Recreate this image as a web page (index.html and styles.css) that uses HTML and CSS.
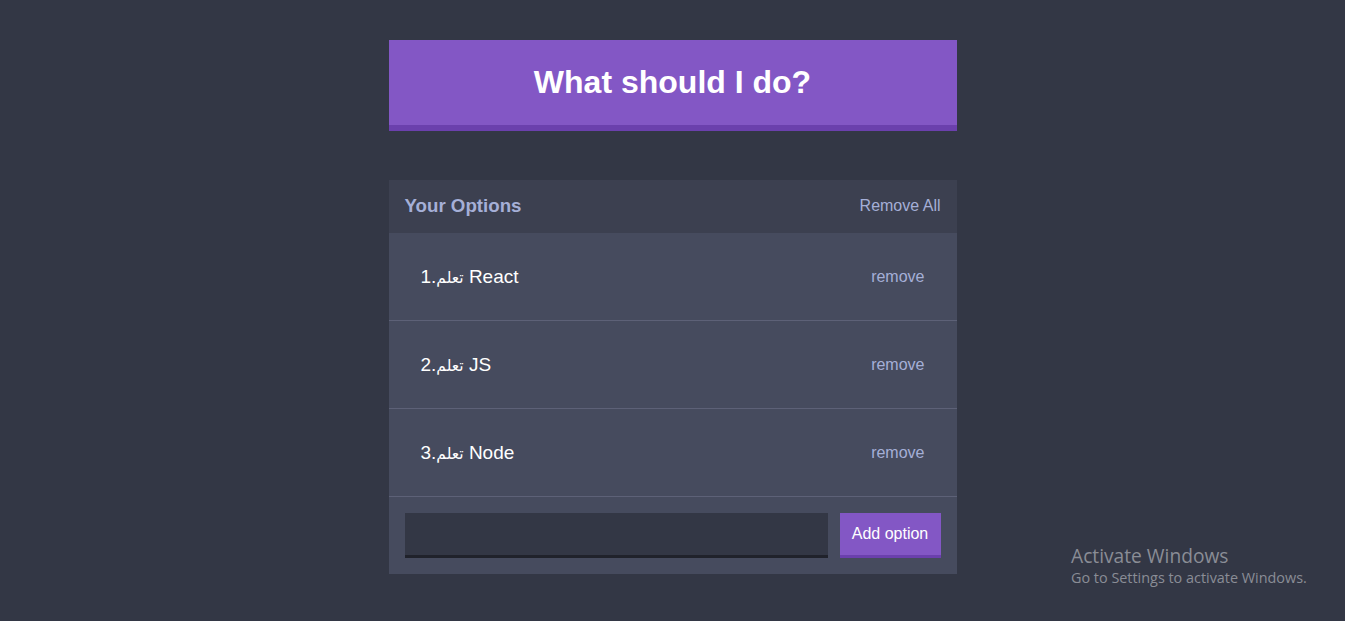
FILE: index.html
```html
<!DOCTYPE html>
<html lang="en">
<head>
<meta charset="utf-8">
<title>Indecision</title>
<link rel="stylesheet" href="styles.css">
</head>
<body>
<div class="container">
  <header class="header">
    <h1 class="header__title">What should I do?</h1>
  </header>
  <div class="widget">
    <div class="widget-header">
      <h3 class="widget-header__title">Your Options</h3>
      <button class="button-link">Remove All</button>
    </div>
    <div class="option">
      <p class="option__text">1.<span class="option__ar">تعلم</span> React</p>
      <button class="button-link button-link--small">remove</button>
    </div>
    <div class="option">
      <p class="option__text">2.<span class="option__ar">تعلم</span> JS</p>
      <button class="button-link button-link--small">remove</button>
    </div>
    <div class="option">
      <p class="option__text">3.<span class="option__ar">تعلم</span> Node</p>
      <button class="button-link button-link--small">remove</button>
    </div>
    <form class="add-option">
      <input class="add-option__input" type="text" name="option">
      <button class="button" type="button">Add option</button>
    </form>
  </div>
</div>
<div class="activate">
  <div class="activate__title">Activate Windows</div>
  <div class="activate__sub">Go to Settings to activate Windows.</div>
</div>
</body>
</html>
```
FILE: styles.css
```css
html, body {
  margin: 0;
  padding: 0;
}
body {
  background: #333745;
  font-family: Arial, "Liberation Sans", "DejaVu Sans", sans-serif;
  color: #ffffff;
  height: 621px;
  overflow: hidden;
}
.container {
  width: 568px;
  margin: 0 auto;
  padding-top: 40px;
}
.header {
  background: #8357c5;
  border-bottom: 6px solid #6b40ad;
  height: 85px;
  display: flex;
  align-items: center;
  justify-content: center;
  margin-bottom: 49px;
}
.header__title {
  margin: 0;
  font-size: 32px;
  font-weight: bold;
  color: #ffffff;
}
.widget {
  background: #464b5e;
}
.widget-header {
  background: #3c4050;
  height: 53px;
  padding: 0 16px 2px 16px;
  display: flex;
  align-items: center;
  justify-content: space-between;
  box-sizing: border-box;
}
.widget-header__title {
  margin: 0;
  font-size: 18.7px;
  font-weight: bold;
  color: #a5afd7;
}
.button-link {
  background: none;
  border: none;
  padding: 0;
  font-family: inherit;
  font-size: 16px;
  color: #a5afd7;
}
.button-link--small {
  font-size: 16px;
}
.option {
  padding: 0 32px;
  box-sizing: border-box;
  height: 88px;
  display: flex;
  align-items: center;
  justify-content: space-between;
  border-bottom: 1px solid #5d6177;
}
.option__text {
  margin: 0;
  font-size: 19px;
  color: #ffffff;
}
.option__ar {
  font-size: 15.5px;
}
.add-option {
  display: flex;
  gap: 12px;
  padding: 16px;
  margin: 0;
}
.add-option__input {
  flex: 1;
  height: 45px;
  box-sizing: border-box;
  background: #333745;
  border: none;
  border-bottom: 3px solid #20222b;
  color: #a5afd7;
  margin: 0;
  padding: 0 12px;
  outline: none;
}
.button {
  background: #8357c5;
  border: none;
  border-bottom: 3px solid #6b40ad;
  color: #ffffff;
  font-family: inherit;
  font-size: 16px;
  width: 101px;
  height: 45px;
  padding: 0;
  margin: 0;
  box-sizing: border-box;
}
.activate {
  position: absolute;
  left: 1071px;
  top: 543px;
  font-family: "Open Sans", "Noto Sans", sans-serif;
  color: #8a8d96;
}
.activate__title {
  font-size: 19.2px;
  line-height: 25px;
}
.activate__sub {
  font-size: 14.4px;
  line-height: 20px;
}
```
